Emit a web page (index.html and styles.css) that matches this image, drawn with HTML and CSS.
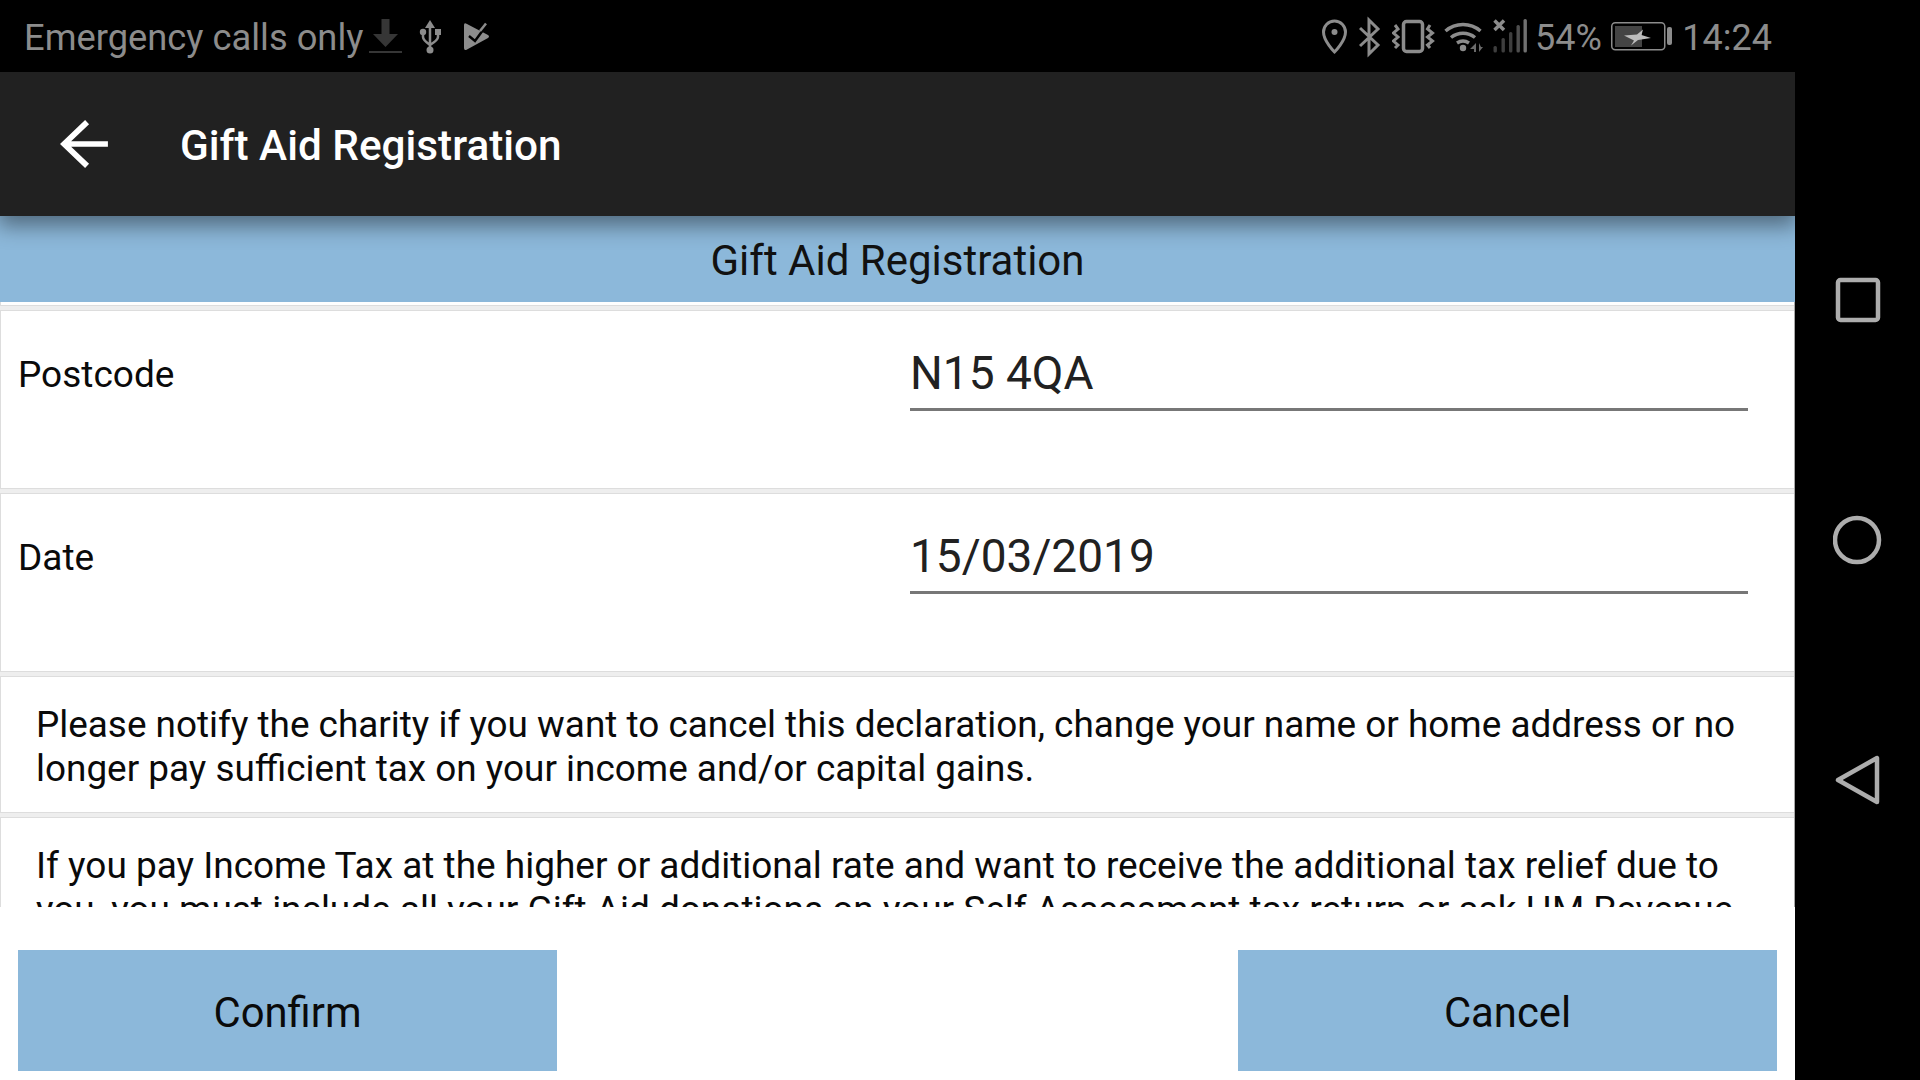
FILE: index.html
```html
<!DOCTYPE html>
<html lang="en">
<head>
<meta charset="utf-8">
<title>Gift Aid Registration</title>
<link rel="stylesheet" href="styles.css">
</head>
<body>
<div class="screen">
  <div class="main">
    <div class="status">
      <span class="status-text carrier">Emergency calls only</span>
      <svg class="ic ic-dl" width="33" height="72" viewBox="369 0 33 72"><polygon class="dim" points="381.5,19 389.5,19 389.5,34 398,34 385.5,47 373,34 381.5,34"/><rect class="dim" x="369" y="51" width="33" height="2"/></svg>
      <svg class="ic ic-usb" width="24" height="72" viewBox="419 0 24 72"><polygon class="fg" points="430,20 425,28 435,28"/><path class="ln" d="M430 26V50M423 33V37Q423 40 430 45M438 33V37Q438 40 430 45"/><circle class="fg" cx="430" cy="50" r="3.5"/><circle class="fg" cx="423" cy="32" r="3.2"/><rect class="fg" x="435" y="29" width="6" height="6"/></svg>
      <svg class="ic ic-play" width="26" height="72" viewBox="463 0 26 72"><path class="fg" d="M463 25Q463 22 466 24L487 35Q489 36.500 487 38L466 49.500Q463 51 463 48Z"/><path class="cut" d="M468 36L474 41L482 30"/><path class="ln" d="M479 31L485 23.500"/></svg>
      <div class="status-right">
        <svg class="ic" width="26" height="72" viewBox="1323 0 26 72"><path class="ln thick" d="M1335.500 52C1335.500 52 1324.500 41 1324.500 32A11 11 0 0 1 1346.500 32C1346.500 41 1335.500 52 1335.500 52Z"/><circle class="fg" cx="1335.500" cy="32" r="3"/></svg>
        <svg class="ic ic-bt" width="22" height="72" viewBox="1360 0 22 72"><path class="ln thick" d="M1361 28L1379 45L1370 54V20L1379 29L1361 46"/></svg>
        <svg class="ic ic-vib" width="43" height="72" viewBox="1393 0 43 72"><rect class="ln heavy" x="1404.500" y="21.500" width="19" height="30" rx="3"/><path class="ln thick" d="M1396 25L1399 29L1394.500 33L1399 37L1394.500 41L1399 45L1396 48M1431 25L1428.500 29L1433.500 33L1428.500 37L1433.500 41L1428.500 45L1431 48"/></svg>
        <svg class="ic ic-wifi" width="40" height="72" viewBox="1445 0 40 72"><path class="ln heavy" d="M1446.500 31A27 27 0 0 1 1481.500 31M1452 37.500A19 19 0 0 1 1476 37.500M1458 43A11 11 0 0 1 1470 43"/><circle class="fg" cx="1464" cy="48" r="3.200"/><polygon class="dim2" points="1477,43 1477,52 1475,52 1475,49 1471,49"/><polygon class="dim2" points="1480,43 1480,52 1484,47 1482,47"/></svg>
        <svg class="ic ic-sig" width="36" height="72" viewBox="1494 0 36 72"><path class="ln heavy" d="M1495.500 20.500L1505 30M1505 20.500L1495.500 30"/><rect class="bar1" x="1494.500" y="46" width="3.400" height="6.500" rx="1.500"/><rect class="bar1" x="1502.500" y="38" width="3.400" height="14.500" rx="1.500"/><rect class="bar1" x="1510" y="32" width="3.400" height="20.500" rx="1.500"/><rect class="bar2" x="1517.500" y="25" width="3.400" height="27.500" rx="1.500"/><rect class="bar3" x="1524.500" y="19" width="3.400" height="33.500" rx="1.500"/></svg>
        <span class="status-text pct">54%</span>
        <svg class="ic ic-bat" width="62" height="72" viewBox="1611 0 62 72"><rect class="bat" x="1611.750" y="22.750" width="53" height="27" rx="3.500"/><rect class="dim3" x="1615" y="26" width="27" height="21"/><rect class="fg" x="1667" y="27" width="5" height="18" rx="2"/><polygon class="bolt" points="1624,35.500 1637,34.500 1643,29.500 1641.500,35 1651,38 1638,40 1631,45.500 1634,40.500"/></svg>
        <span class="status-text time">14:24</span>
      </div>
    </div>
    <div class="appbar">
      <svg class="back" width="50" height="50" viewBox="0 0 48 48"><path d="M46 24H5M26 3L4 24L26 45"/></svg>
      <span class="title">Gift Aid Registration</span>
    </div>
    <div class="page-head">Gift Aid Registration</div>
    <div class="scroll">
      <div class="row row-prev"></div>
      <div class="row row-field">
        <label class="label">Postcode</label>
        <div class="input">N15 4QA</div>
      </div>
      <div class="row row-field">
        <label class="label">Date</label>
        <div class="input">15/03/2019</div>
      </div>
      <div class="row row-text row-short">Please notify the charity if you want to cancel this declaration, change your name or home address or no longer pay sufficient tax on your income and/or capital gains.</div>
      <div class="row row-text row-long">If you pay Income Tax at the higher or additional rate and want to receive the additional tax relief due to you, you must include all your Gift Aid donations on your Self Assessment tax return or ask HM Revenue and Customs to adjust your tax code.</div>
    </div>
    <div class="actions">
      <button class="btn">Confirm</button>
      <button class="btn">Cancel</button>
    </div>
  </div>
  <nav class="navbar">
    <svg width="48" height="50" viewBox="0 0 48 50"><rect class="nav-ic" x="4" y="5" width="40" height="40" rx="2.500"/></svg>
    <svg width="50" height="50" viewBox="1 0 50 50"><circle class="nav-ic" cx="25" cy="25" r="22"/></svg>
    <svg width="48" height="50" viewBox="0 0 48 50"><path class="nav-ic" d="M4 25L43 3V47Z"/></svg>
  </nav>
</div>
</body>
</html>
```

FILE: styles.css
```css
* { box-sizing: border-box; }
html, body { margin: 0; padding: 0; background: #000; }
body { font-family: Roboto, "Liberation Sans", sans-serif; overflow: hidden; }
.screen { display: flex; width: 1920px; height: 1080px; }
.main { width: 1795px; height: 1080px; display: flex; flex-direction: column; background: #fff; }

.status { height: 72px; flex: none; background: #000; display: flex; align-items: center; padding: 0 23px 0 24px; }
.status-text { color: #8c8c8c; font-size: 36px; white-space: nowrap; padding-top: 3px; }
.carrier { font-size: 36.3px; }
.status-right { margin-left: auto; display: flex; align-items: center; }
.ic { display: block; flex: none; }
.ic-dl { margin-left: 6px; }
.ic-usb { margin-left: 17px; }
.ic-play { margin-left: 20.5px; }
.ic-bt { margin-left: 11px; }
.ic-vib { margin-left: 11px; }
.ic-wifi { margin-left: 9px; }
.ic-sig { margin-left: 9px; }
.pct { margin-left: 5.7px; }
.ic-bat { margin-left: 9.5px; }
.time { margin-left: 9px; }
.fg { fill: #8c8c8c; }
.dim { fill: #363636; }
.dim2 { fill: #6a6a6a; }
.dim3 { fill: #444; }
.ln { fill: none; stroke: #8c8c8c; stroke-width: 2.500; }
.thick { stroke-width: 3; }
.heavy { stroke-width: 3.500; }
.cut { fill: none; stroke: #000; stroke-width: 2.500; }
.bar1 { fill: #3e3e3e; }
.bar2 { fill: #4e4e4e; }
.bar3 { fill: #707070; }
.bat { fill: none; stroke: #8c8c8c; stroke-width: 1.500; }
.bolt { fill: #bcbcbc; }

.appbar { height: 144px; flex: none; background: #212121; display: flex; align-items: center; padding-left: 60px; position: relative; z-index: 2; box-shadow: 0 8px 20px 2px rgba(0,0,0,.42); }
.back { display: block; flex: none; }
.back path { fill: none; stroke: #fff; stroke-width: 5.500; }
.title { color: #fff; font-size: 42.3px; font-weight: 500; margin-left: 70px; padding-top: 2px; white-space: nowrap; }

.page-head { height: 86px; flex: none; background: #8cb8da; color: #111; font-size: 42px; padding-top: 2px; display: flex; align-items: center; justify-content: center; }

.scroll { height: 605px; flex: none; overflow: hidden; background: #eee; border-right: 1px solid #a8a8a8; }
.row { background: #fff; border: 1px solid #ddd; border-right: 0; margin-bottom: 4px; }
.row-prev { height: 4px; border-top: 0; }
.row-field { height: 179px; display: flex; padding: 33px 46px 0 17px; }
.label { width: 892px; flex: none; font-size: 37px; line-height: 44px; padding-top: 8.5px; color: #0a0a0a; }
.input { flex: 1; height: 67px; border-bottom: 3px solid #777; font-size: 46px; line-height: 58px; color: #212121; }
.row-text { padding: 26px 40px 20px 35px; font-size: 36.9px; line-height: 44px; color: #0a0a0a; }
.row-short { height: 137px; }
.row-long { font-size: 36.97px; }

.actions { flex: 1; display: flex; justify-content: space-between; align-items: flex-start; padding: 43px 18px 0; background: #fff; }
.btn { width: 539px; height: 121px; border: 0; border-radius: 0; background: #8cb8da; color: #0a0a0a; font-family: inherit; font-size: 41.8px; padding: 4px 0 0; }

.navbar { width: 125px; display: flex; flex-direction: column; align-items: center; justify-content: center; gap: 190px; background: #000; }
.navbar svg { display: block; }
.nav-ic { fill: none; stroke: #adadad; stroke-width: 4.500; stroke-linejoin: round; }
```
